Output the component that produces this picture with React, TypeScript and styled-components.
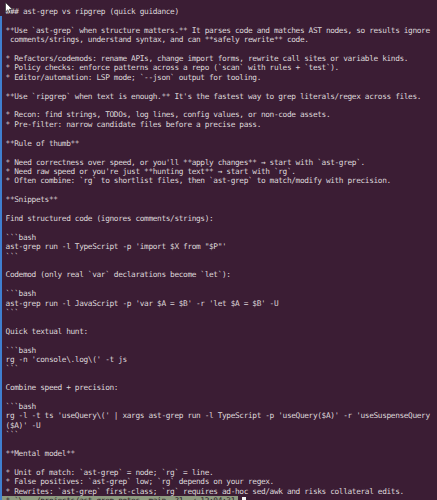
import React from "react";
import styled, { createGlobalStyle } from "styled-components";

const Global = createGlobalStyle`
  html, body { margin: 0; padding: 0; background: #3b1d34; }
  body { width: 437px; height: 500px; overflow: hidden; }
`;

const Terminal = styled.div`
  position: relative;
  width: 437px;
  height: 500px;
  overflow: hidden;
  background: #3b1d34;
  box-sizing: border-box;
`;

const FocusBar = styled.div`
  position: absolute;
  left: 0;
  top: 16px;
  bottom: 0;
  width: 2px;
  background: #3f7fd0;
`;

const Screen = styled.div`
  display: flex;
  flex-direction: column;
  padding: 7px 0 0 5.6px;
  font-family: "DejaVu Sans Mono", "Liberation Mono", monospace;
  font-size: 7.8px;
  letter-spacing: -0.366px;
  color: #ddd6d9;
`;

const Line = styled.div<{ $status?: boolean }>`
  height: 9.42px;
  line-height: 9.42px;
  white-space: pre;
  ${(p) =>
    p.$status
      ? `display: flex; align-items: flex-start; margin-left: -5.6px;`
      : ""}
`;

const StatusBand = styled.span`
  display: inline-block;
  height: 9.42px;
  background: #8e9a80;
  color: #2b1a27;
  padding: 0 3px 0 5.6px;
`;

const Cursor = styled.span`
  display: inline-block;
  width: 4.3px;
  height: 8px;
  background: #f2f2f2;
  margin-left: 4px;
  margin-top: 1px;
`;

const Pointer = styled.svg`
  position: absolute;
  left: 5px;
  top: 2px;
  width: 8px;
  height: 12px;
`;

const lines: string[] = [
  "### ast-grep vs ripgrep (quick guidance)",
  "",
  "**Use `ast-grep` when structure matters.** It parses code and matches AST nodes, so results ignore",
  " comments/strings, understand syntax, and can **safely rewrite** code.",
  "",
  "* Refactors/codemods: rename APIs, change import forms, rewrite call sites or variable kinds.",
  "* Policy checks: enforce patterns across a repo (`scan` with rules + `test`).",
  "* Editor/automation: LSP mode; `--json` output for tooling.",
  "",
  "**Use `ripgrep` when text is enough.** It's the fastest way to grep literals/regex across files.",
  "",
  "* Recon: find strings, TODOs, log lines, config values, or non-code assets.",
  "* Pre-filter: narrow candidate files before a precise pass.",
  "",
  "**Rule of thumb**",
  "",
  "* Need correctness over speed, or you'll **apply changes** → start with `ast-grep`.",
  "* Need raw speed or you're just **hunting text** → start with `rg`.",
  "* Often combine: `rg` to shortlist files, then `ast-grep` to match/modify with precision.",
  "",
  "**Snippets**",
  "",
  "Find structured code (ignores comments/strings):",
  "",
  "```bash",
  "ast-grep run -l TypeScript -p 'import $X from \"$P\"'",
  "```",
  "",
  "Codemod (only real `var` declarations become `let`):",
  "",
  "```bash",
  "ast-grep run -l JavaScript -p 'var $A = $B' -r 'let $A = $B' -U",
  "```",
  "",
  "Quick textual hunt:",
  "",
  "```bash",
  "rg -n 'console\\.log\\(' -t js",
  "```",
  "",
  "Combine speed + precision:",
  "",
  "```bash",
  "rg -l -t ts 'useQuery\\(' | xargs ast-grep run -l TypeScript -p 'useQuery($A)' -r 'useSuspenseQuery",
  "($A)' -U",
  "```",
  "",
  "**Mental model**",
  "",
  "* Unit of match: `ast-grep` = node; `rg` = line.",
  "* False positives: `ast-grep` low; `rg` depends on your regex.",
  "* Rewrites: `ast-grep` first-class; `rg` requires ad-hoc sed/awk and risks collateral edits.",
];

export default function App() {
  return (
    <Terminal>
      <Global />
      <FocusBar />
      <Screen>
        {lines.map((l, i) => (
          <Line key={i}>{l}</Line>
        ))}
        <Line $status>
          <StatusBand>{"* `\\  ~/projects/ast-grep-notes  main  ?1  ✓ 12:04:31"}</StatusBand>
          <Cursor />
        </Line>
      </Screen>
      <Pointer viewBox="0 0 8 12">
        <path d="M0.5 0.5 L0.5 10 L2.8 7.8 L4.4 11.4 L5.8 10.8 L4.3 7.3 L7.4 7.3 Z" fill="#fff" stroke="#222" strokeWidth="0.6" />
      </Pointer>
    </Terminal>
  );
}
